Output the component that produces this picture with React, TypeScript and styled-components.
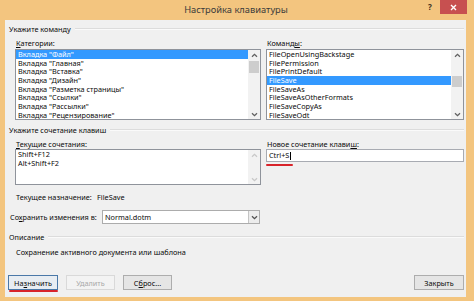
import React from "react";
import styled, { createGlobalStyle, css } from "styled-components";

const FONT = `"Noto Sans", "Open Sans", "DejaVu Sans", sans-serif`;

const Global = createGlobalStyle`
  html, body { margin: 0; padding: 0; }
  body { width: 474px; height: 301px; overflow: hidden; font-family: ${FONT}; }
`;

const Window = styled.div`
  width: 474px;
  height: 301px;
  box-sizing: border-box;
  background: #f3c57f;
  display: flex;
  flex-direction: column;
  padding: 0 8px 4px 5px;
  font-family: ${FONT};
  font-size: 7.3px;
  color: #0a0a0a;
  white-space: nowrap;
`;

const TitleBar = styled.div`
  height: 20px;
  display: grid;
  grid-template-columns: 1fr auto 1fr;
  margin-right: -1px;
`;

const Title = styled.div`
  grid-column: 2;
  align-self: center;
  font-size: 9.3px;
  color: #3b3b3b;
  line-height: 20px;
`;

const Controls = styled.div`
  grid-column: 3;
  justify-self: end;
  display: flex;
  align-items: flex-start;
  gap: 5px;
`;

const Help = styled.div`
  width: 10px;
  height: 14px;
  line-height: 14px;
  text-align: center;
  font-size: 8px;
  font-weight: bold;
  color: #3a3020;
`;

const Close = styled.div`
  width: 27px;
  height: 14px;
  background: #c75050;
  color: #fff;
  display: flex;
  align-items: center;
  justify-content: center;
`;

const Body = styled.div`
  flex: 1;
  background: #f0f0f0;
  display: flex;
  flex-direction: column;
  padding: 4px 2px 7px 4px;
  min-height: 0;
`;

const GroupHeader = styled.div<{ $mt?: number }>`
  display: flex;
  align-items: center;
  gap: 4px;
  height: 10px;
  line-height: 10px;
  margin-top: ${(p) => p.$mt ?? 0}px;
  &::after {
    content: "";
    flex: 1;
    border-top: 1px solid #dcdcdc;
    border-bottom: 1px solid #fafafa;
  }
`;

const Columns = styled.div`
  display: grid;
  grid-template-columns: 246px 198px;
  column-gap: 5px;
  margin: 4px 0 0 6px;
  align-items: start;
`;

const Col = styled.div`
  display: flex;
  flex-direction: column;
`;

const FieldLabel = styled.div`
  height: 10px;
  line-height: 10px;
  padding-left: 1px;
`;

const ListBox = styled.div<{ $h: number; $mt?: number }>`
  height: ${(p) => p.$h}px;
  margin-top: ${(p) => p.$mt ?? 0}px;
  box-sizing: border-box;
  border: 1px solid #8f939b;
  background: #fff;
  display: flex;
`;

const Items = styled.div`
  flex: 1;
  display: flex;
  flex-direction: column;
  overflow: hidden;
`;

const Item = styled.div<{ $sel?: boolean; $h?: number }>`
  height: ${(p) => p.$h ?? 8.67}px;
  line-height: ${(p) => p.$h ?? 8.67}px;
  padding-left: 2px;
  ${(p) =>
    p.$sel &&
    css`
      background: #3399ff;
      color: #fff;
    `}
`;

const Scroll = styled.div<{ $disabled?: boolean }>`
  width: 12px;
  background: #f2f2f2;
  display: flex;
  flex-direction: column;
  color: ${(p) => (p.$disabled ? "#c8c8c8" : "#606060")};
`;

const ScrollArrow = styled.div`
  height: 10px;
  display: flex;
  align-items: center;
  justify-content: center;
`;

const Track = styled.div`
  flex: 1;
  display: flex;
  flex-direction: column;
`;

const Thumb = styled.div<{ $top: number; $h: number }>`
  margin: ${(p) => p.$top}px 1px 0 1px;
  height: ${(p) => p.$h}px;
  background: #cdcdcd;
`;

const Chevron = ({ down }: { down?: boolean }) => (
  <svg width="7" height="5" viewBox="0 0 7 5">
    <path
      d={down ? "M1 1.2 L3.5 3.6 L6 1.2" : "M1 3.8 L3.5 1.4 L6 3.8"}
      fill="none"
      stroke="currentColor"
      strokeWidth="1.3"
    />
  </svg>
);

const ScrollBar = ({
  thumbTop,
  thumbH,
  disabled,
}: {
  thumbTop?: number;
  thumbH?: number;
  disabled?: boolean;
}) => (
  <Scroll $disabled={disabled}>
    <ScrollArrow>
      <Chevron />
    </ScrollArrow>
    <Track>{thumbH ? <Thumb $top={thumbTop ?? 0} $h={thumbH} /> : null}</Track>
    <ScrollArrow>
      <Chevron down />
    </ScrollArrow>
  </Scroll>
);

const TextInput = styled.div`
  height: 13px;
  box-sizing: border-box;
  border: 1px solid #a8abb2;
  background: #fff;
  line-height: 11px;
  padding-left: 2px;
  display: flex;
  align-items: center;
`;

const Caret = styled.span`
  display: inline-block;
  width: 1px;
  height: 8px;
  background: #000;
  margin-left: 0.5px;
`;

const RedMark = styled.div<{ $w: number }>`
  width: ${(p) => p.$w}px;
  height: 2px;
  margin-top: 2px;
  border-radius: 1px;
  background: #d8232a;
`;

const AssignRow = styled.div`
  display: grid;
  grid-template-columns: 81px auto;
  margin: 7px 0 0 7px;
  height: 10px;
  line-height: 10px;
`;

const SaveRow = styled.div`
  display: grid;
  grid-template-columns: 92px 158px;
  align-items: center;
  margin: 8px 0 0 1px;
  height: 14px;
`;

const Select = styled.div`
  height: 14px;
  box-sizing: border-box;
  border: 1px solid #acacac;
  background: #fff;
  display: flex;
  align-items: stretch;
`;

const SelectValue = styled.div`
  flex: 1;
  padding-left: 2px;
  line-height: 12px;
`;

const SelectButton = styled.div`
  width: 11px;
  box-sizing: border-box;
  border-left: 1px solid #c4c4c4;
  background: #ececec;
  color: #505050;
  display: flex;
  align-items: center;
  justify-content: center;
`;

const Description = styled.div`
  margin: 5px 0 0 7px;
  height: 10px;
  line-height: 10px;
`;

const ButtonRow = styled.div`
  margin-top: auto;
  display: flex;
  gap: 8px;
  margin-left: -1px;
`;

const Button = styled.div<{ $default?: boolean; $disabled?: boolean; $marked?: boolean }>`
  position: relative;
  width: 49px;
  height: 15px;
  box-sizing: border-box;
  border: 1px solid #adadad;
  background: #e5e5e5;
  display: flex;
  align-items: center;
  justify-content: center;
  ${(p) =>
    p.$default &&
    css`
      border-color: #4a78a8;
      background: #e8edf2;
    `}
  ${(p) =>
    p.$disabled &&
    css`
      border-color: #d9d9d9;
      background: #f3f3f3;
      color: #a8a8a8;
    `}
  ${(p) =>
    p.$marked &&
    css`
      &::after {
        content: "";
        position: absolute;
        left: 0;
        right: -1px;
        bottom: -3px;
        height: 2px;
        border-radius: 1px;
        background: #d8232a;
      }
    `}
`;

const Spacer = styled.div`
  flex: 1;
`;

const WideButton = styled(Button)`
  width: 50px;
`;

const categories = [
  "Вкладка \"Файл\"",
  "Вкладка \"Главная\"",
  "Вкладка \"Вставка\"",
  "Вкладка \"Дизайн\"",
  "Вкладка \"Разметка страницы\"",
  "Вкладка \"Ссылки\"",
  "Вкладка \"Рассылки\"",
  "Вкладка \"Рецензирование\"",
];

const commands = [
  "FileOpenUsingBackstage",
  "FilePermission",
  "FilePrintDefault",
  "FileSave",
  "FileSaveAs",
  "FileSaveAsOtherFormats",
  "FileSaveCopyAs",
  "FileSaveOdt",
];

export default function App() {
  return (
    <>
      <Global />
      <Window>
        <TitleBar>
          <Title>Настройка клавиатуры</Title>
          <Controls>
            <Help>?</Help>
            <Close>
              <svg width="7" height="7" viewBox="0 0 7 7">
                <path d="M1 1 L6 6 M6 1 L1 6" stroke="#fff" strokeWidth="1.4" />
              </svg>
            </Close>
          </Controls>
        </TitleBar>
        <Body>
          <GroupHeader>Укажите команду</GroupHeader>
          <Columns>
            <Col>
              <FieldLabel>
                <u>К</u>атегории:
              </FieldLabel>
              <ListBox $h={71} $mt={1}>
                <Items>
                  {categories.map((c, i) => (
                    <Item key={c} $sel={i === 0}>
                      {c}
                    </Item>
                  ))}
                </Items>
                <ScrollBar thumbTop={1} thumbH={12} />
              </ListBox>
            </Col>
            <Col>
              <FieldLabel>
                Команд<u>ы</u>:
              </FieldLabel>
              <ListBox $h={71} $mt={1}>
                <Items>
                  {commands.map((c, i) => (
                    <Item key={c} $sel={i === 3}>
                      {c}
                    </Item>
                  ))}
                </Items>
                <ScrollBar thumbTop={16} thumbH={11} />
              </ListBox>
            </Col>
          </Columns>

          <GroupHeader $mt={5}>Укажите сочетание клавиш</GroupHeader>
          <Columns>
            <Col>
              <FieldLabel>
                <u>Т</u>екущие сочетания:
              </FieldLabel>
              <ListBox $h={36}>
                <Items>
                  <Item $h={9}>Shift+F12</Item>
                  <Item $h={9}>Alt+Shift+F2</Item>
                </Items>
                <ScrollBar disabled />
              </ListBox>
            </Col>
            <Col>
              <FieldLabel>
                Новое сочетание клави<u>ш</u>:
              </FieldLabel>
              <TextInput>
                Ctrl+S
                <Caret />
              </TextInput>
              <RedMark $w={27} />
            </Col>
          </Columns>
          <AssignRow>
            <span>Текущее назначение:</span>
            <span>FileSave</span>
          </AssignRow>
          <SaveRow>
            <span>
              Со<u>х</u>ранить изменения в:
            </span>
            <Select>
              <SelectValue>Normal.dotm</SelectValue>
              <SelectButton>
                <Chevron down />
              </SelectButton>
            </Select>
          </SaveRow>

          <GroupHeader $mt={8}>Описание</GroupHeader>
          <Description>Сохранение активного документа или шаблона</Description>

          <ButtonRow>
            <WideButton $default $marked>
              На<u>з</u>начить
            </WideButton>
            <Button $disabled>Удалить</Button>
            <Button>
              С<u>б</u>рос...
            </Button>
            <Spacer />
            <WideButton>Закрыть</WideButton>
          </ButtonRow>
        </Body>
      </Window>
    </>
  );
}
